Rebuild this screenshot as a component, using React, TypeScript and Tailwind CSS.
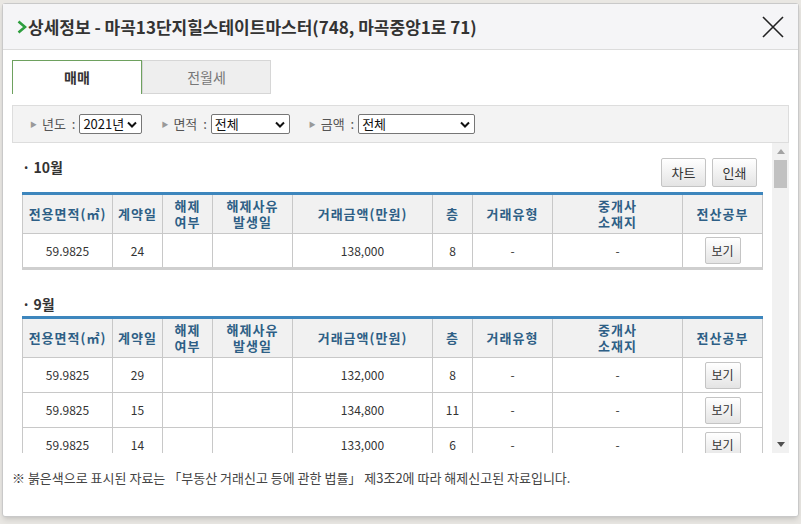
import React from 'react';

const font = { fontFamily: '"Noto Sans CJK KR", "Noto Sans", sans-serif' };

const cols = [90, 50, 50, 80, 140, 40, 80, 130, 80];

interface Row {
  area: string;
  day: string;
  price: string;
  floor: string;
}

const oct: Row[] = [{ area: '59.9825', day: '24', price: '138,000', floor: '8' }];
const sep: Row[] = [
  { area: '59.9825', day: '29', price: '132,000', floor: '8' },
  { area: '59.9825', day: '15', price: '134,800', floor: '11' },
  { area: '59.9825', day: '14', price: '133,000', floor: '6' },
];

function GrayButton({ label, className }: { label: string; className: string }) {
  return (
    <button
      className={`border border-[#c4c4c4] rounded-[2px] bg-gradient-to-b from-white to-[#e4e4e4] text-[#333] ${className}`}
    >
      {label}
    </button>
  );
}

function DealTable({ rows, shadow }: { rows: Row[]; shadow?: boolean }) {
  const th = 'border-l border-[#c8c8c8] first:border-l-0 text-[13px] font-bold text-[#2e5f86] leading-[16px] text-center tracking-[1px]';
  const td = 'border-l border-t border-[#c8c8c8] first:border-l-0 text-[12px] text-[#333] text-center';
  return (
    <table
      className={`table-fixed border-collapse w-[740px] border-t-[3px] border-t-[#3d86bd] border-x border-[#c8c8c8] ${shadow ? 'border-b-[3px] border-b-[#cfcfcf]' : ''}`}
    >
      <colgroup>
        {cols.map((w, i) => (
          <col key={i} style={{ width: w }} />
        ))}
      </colgroup>
      <thead>
        <tr className="h-[40px] bg-[#f1f1f1]">
          <th className={th}>전용면적(㎡)</th>
          <th className={th}>계약일</th>
          <th className={th}>해제<br />여부</th>
          <th className={th}>해제사유<br />발생일</th>
          <th className={th}>거래금액(만원)</th>
          <th className={th}>층</th>
          <th className={th}>거래유형</th>
          <th className={th}>중개사<br />소재지</th>
          <th className={th}>전산공부</th>
        </tr>
      </thead>
      <tbody>
        {rows.map((r, i) => (
          <tr key={i} className="h-[35px]">
            <td className={td}>{r.area}</td>
            <td className={td}>{r.day}</td>
            <td className={td}></td>
            <td className={td}></td>
            <td className={td}>{r.price}</td>
            <td className={td}>{r.floor}</td>
            <td className={td}>-</td>
            <td className={td}>-</td>
            <td className={td}>
              <GrayButton label="보기" className="w-[36px] h-[27px] text-[12px]" />
            </td>
          </tr>
        ))}
      </tbody>
    </table>
  );
}

function Filter({ label, value, width }: { label: string; value: string; width: string }) {
  return (
    <div className="flex items-center">
      <span className="text-[7px] text-[#999] mr-[5px]">▶</span>
      <span className="text-[13px] text-[#555] mr-[4px] whitespace-pre">{label} :</span>
      <div className={`flex items-center justify-between h-[20px] border border-[#767676] rounded-[2px] bg-white pl-[3px] pr-[4px] ${width}`}>
        <span className="text-[13px] text-[#111]">{value}</span>
        <svg width="10" height="7" viewBox="0 0 10 7">
          <path d="M1 1.5 L5 5.5 L9 1.5" fill="none" stroke="#111" strokeWidth="2" />
        </svg>
      </div>
    </div>
  );
}

export default function App() {
  return (
    <div className="w-[801px] h-[524px] bg-[#e9e7e3] pt-[3px] pl-[2px] overflow-hidden" style={font}>
      <div className="w-[797px] h-[514px] bg-white border border-[#c9c9c9] rounded-[3px] shadow-md flex flex-col">
        {/* header */}
        <div className="h-[46px] bg-[#f5f5f7] border-b border-[#dcdcdc] flex items-center pl-[14px] pr-[14px] shrink-0">
          <svg width="10" height="14" viewBox="0 0 10 14" className="mr-[1px]">
            <path d="M1.5 1.5 L8 7 L1.5 12.5" fill="none" stroke="#2e9e3e" strokeWidth="2.6" />
          </svg>
          <h1 className="text-[17px] font-bold text-[#333] flex-1">
            상세정보 - 마곡13단지힐스테이트마스터(748, 마곡중앙1로 71)
          </h1>
          <svg width="22" height="22" viewBox="0 0 22 22">
            <path d="M1 1 L21 21 M21 1 L1 21" stroke="#222" strokeWidth="1.6" />
          </svg>
        </div>

        <div className="px-[9px] pt-[10px] flex flex-col">
          {/* tabs */}
          <div className="flex h-[34px]">
            <div className="w-[130px] border border-[#6ea15f] border-b-0 bg-white flex items-center justify-center text-[14px] font-bold text-[#333]">
              매매
            </div>
            <div className="w-[129px] border border-[#d6d6d6] bg-[#eeeeee] flex items-center justify-center text-[14px] text-[#777]">
              전월세
            </div>
          </div>

          {/* filters */}
          <div className="mt-[11px] h-[38px] bg-[#f3f3f3] border border-[#dddddd] flex items-center pl-[17px] gap-[19px]">
            <Filter label="년도 " value="2021년" width="w-[63px]" />
            <Filter label="면적 " value="전체" width="w-[79px]" />
            <Filter label="금액 " value="전체" width="w-[117px]" />
          </div>

          {/* scroll area */}
          <div className="flex h-[310px]">
            <div className="flex-1 overflow-hidden pl-[10px]">
              <div className="flex items-start justify-between w-[740px] h-[29px] mt-[15px]">
                <div className="text-[14px] font-bold text-[#333] leading-[18px]">· 10월</div>
                <div className="flex gap-[6px] mr-[5px]">
                  <GrayButton label="차트" className="w-[45px] h-[29px] text-[13px]" />
                  <GrayButton label="인쇄" className="w-[45px] h-[29px] text-[13px]" />
                </div>
              </div>
              <div className="mt-[5px]">
                <DealTable rows={oct} shadow />
              </div>
              <div className="text-[14px] font-bold text-[#333] mt-[25px] mb-[3px] h-[18px] leading-[18px]">· 9월</div>
              <DealTable rows={sep} />
            </div>
            {/* scrollbar */}
            <div className="w-[17px] bg-[#f1f1f1] flex flex-col items-center">
              <div className="h-[17px] flex items-center justify-center">
                <svg width="8" height="5" viewBox="0 0 8 5"><path d="M0 5 L4 0 L8 5 Z" fill="#a3a3a3" /></svg>
              </div>
              <div className="w-[13px] h-[28px] bg-[#c1c1c1]" />
              <div className="flex-1" />
              <div className="h-[17px] flex items-center justify-center">
                <svg width="8" height="5" viewBox="0 0 8 5"><path d="M0 0 L4 5 L8 0 Z" fill="#505050" /></svg>
              </div>
            </div>
          </div>

          <p className="mt-[15px] text-[13px] text-[#444]">
            ※ 붉은색으로 표시된 자료는 「부동산 거래신고 등에 관한 법률」 제3조2에 따라 해제신고된 자료입니다.
          </p>
        </div>
      </div>
    </div>
  );
}
